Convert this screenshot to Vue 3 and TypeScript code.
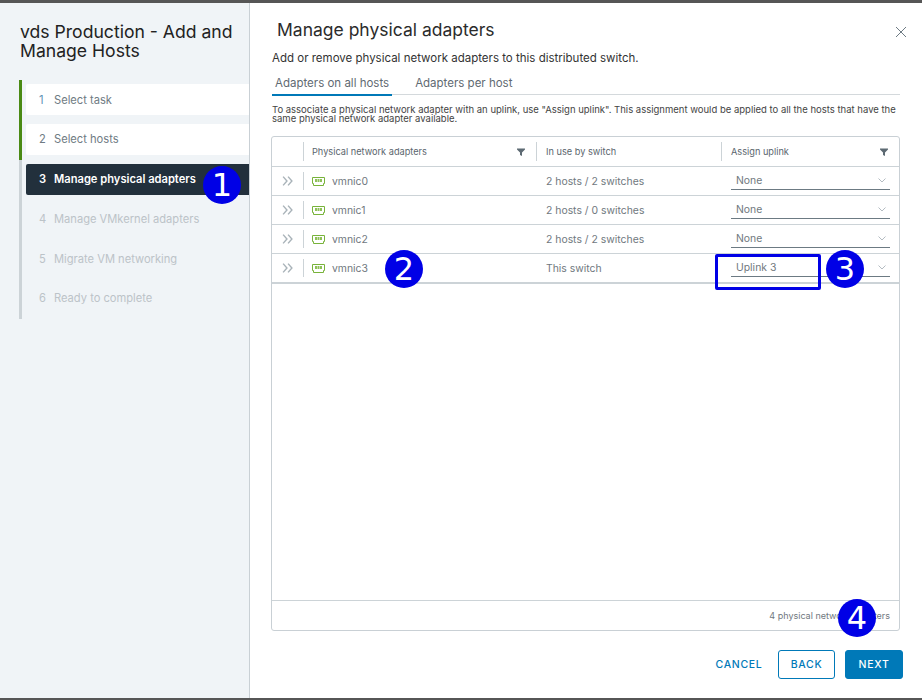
<script setup lang="ts">
interface Step {
  n: number
  label: string
  state: 'done' | 'active' | 'todo'
}
interface Row {
  name: string
  usage: string
  uplink: string
}

const steps: Step[] = [
  { n: 1, label: 'Select task', state: 'done' },
  { n: 2, label: 'Select hosts', state: 'done' },
  { n: 3, label: 'Manage physical adapters', state: 'active' },
  { n: 4, label: 'Manage VMkernel adapters', state: 'todo' },
  { n: 5, label: 'Migrate VM networking', state: 'todo' },
  { n: 6, label: 'Ready to complete', state: 'todo' },
]

const rows: Row[] = [
  { name: 'vmnic0', usage: '2 hosts / 2 switches', uplink: 'None' },
  { name: 'vmnic1', usage: '2 hosts / 0 switches', uplink: 'None' },
  { name: 'vmnic2', usage: '2 hosts / 2 switches', uplink: 'None' },
  { name: 'vmnic3', usage: 'This switch', uplink: 'Uplink 3' },
]
</script>

<template>
  <div class="page">
    <div class="edge" />
    <div class="dialog">
      <aside class="side">
        <h2 class="side-title">vds Production - Add and Manage Hosts</h2>
        <ol class="steps">
          <li v-for="s in steps" :key="s.n" class="step" :class="'step--' + s.state">
            <div class="step-box">
              <span class="step-n">{{ s.n }}</span>
              <span>{{ s.label }}</span>
            </div>
          </li>
        </ol>
      </aside>

      <main class="content">
        <div class="head">
          <h1 class="title">Manage physical adapters</h1>
          <svg class="close" viewBox="0 0 12 12" width="12" height="12">
            <path d="M1 1l10 10M11 1L1 11" stroke="#6d7a83" stroke-width="1" fill="none" />
          </svg>
        </div>
        <p class="lead">Add or remove physical network adapters to this distributed switch.</p>

        <div class="tabs">
          <span class="tab tab--on">Adapters on all hosts</span>
          <span class="tab">Adapters per host</span>
        </div>

        <p class="hint">
          To associate a physical network adapter with an uplink, use "Assign uplink". This assignment would be applied to all the hosts that have the same physical network adapter available.
        </p>

        <section class="grid">
          <div class="tr th">
            <div class="c c-exp" />
            <div class="c c-name">
              <span>Physical network adapters</span>
              <svg class="filter" viewBox="0 0 8 8" width="8" height="8"><path d="M0 0.5h8v1L5 4.5V8L3 7V4.5L0 1.5z" fill="#5d6a73" /></svg>
            </div>
            <div class="c c-use"><span>In use by switch</span></div>
            <div class="c c-up">
              <span>Assign uplink</span>
              <svg class="filter" viewBox="0 0 8 8" width="8" height="8"><path d="M0 0.5h8v1L5 4.5V8L3 7V4.5L0 1.5z" fill="#5d6a73" /></svg>
            </div>
          </div>

          <div v-for="r in rows" :key="r.name" class="tr td">
            <div class="c c-exp">
              <svg viewBox="0 0 10 9" width="11" height="10">
                <path d="M1 .5l3.5 4-3.5 4M5.5 .5l3.5 4-3.5 4" stroke="#a9b3b9" stroke-width="1.3" fill="none" />
              </svg>
            </div>
            <div class="c c-name">
              <svg class="nic" viewBox="0 0 13 9" width="13" height="9">
                <path d="M.5 .5h12v6h-1v2h-10v-2h-1z" stroke="#78b33a" stroke-width="1" fill="none" />
                <path d="M3 2h2v3H3zM5.5 2h2v3h-2zM8 2h2v3H8z" fill="#8fc158" />
              </svg>
              <span class="nic-name">{{ r.name }}</span>
            </div>
            <div class="c c-use plain">{{ r.usage }}</div>
            <div class="c c-up plain">
              <div class="select">
                <span>{{ r.uplink }}</span>
                <svg viewBox="0 0 8 5" width="8" height="5"><path d="M.5 .5L4 4 7.5 .5" stroke="#b4bcc2" fill="none" /></svg>
              </div>
            </div>
          </div>

          <div class="spacer" />
          <div class="foot">4 physical network adapters</div>
        </section>

        <div class="actions">
          <button class="btn btn--link">CANCEL</button>
          <button class="btn btn--outline">BACK</button>
          <button class="btn btn--solid">NEXT</button>
        </div>
      </main>
    </div>
    <div class="edge edge--bottom" />

    <!-- numbered callouts drawn on top of the screenshot -->
    <span class="mark mark-1">1</span>
    <span class="mark mark-2">2</span>
    <span class="mark mark-3">3</span>
    <span class="mark mark-4">4</span>
    <span class="outline-box" />
  </div>
</template>

<style>
body {
  background: #fff;
}
</style>

<style scoped>
.page {
  position: relative;
  width: 922px;
  height: 700px;
  display: flex;
  flex-direction: column;
  overflow: hidden;
  font-family: Inter, "Liberation Sans", sans-serif;
  color: #565656;
}

.edge {
  height: 3px;
  background: #565656;
  flex: none;
}

.edge--bottom {
  height: 2px;
}

.dialog {
  flex: 1;
  display: flex;
  min-height: 0;
}

.side {
  width: 249px;
  flex: none;
  background: #f0f4f7;
  border-right: 1px solid #c9d0d5;
  padding-top: 19px;
}

.side-title {
  margin: 0 0 0 20px;
  width: 225px;
  font-size: 17.6px;
  line-height: 19px;
  font-weight: 400;
  color: #222;
}

.steps {
  list-style: none;
  margin: 20px 0 0 19px;
  padding: 0;
  border-left: 3px solid #ccd3d7;
}

.step {
  padding: 4px 0 0 4px;
  height: 39.75px;
  box-sizing: border-box;
  font-size: 11.15px;
}

.step--done {
  border-left: 3px solid #4a8a14;
  margin-left: -3px;
}

.step-box {
  height: 31px;
  display: flex;
  align-items: center;
  padding-left: 13px;
  border-radius: 2px 0 0 2px;
}

.step-n {
  width: 15px;
  flex: none;
}

.step--done .step-box {
  background: #fff;
  color: #6f7b83;
}

.step--done:first-child .step-n {
  color: #5f93b5;
}

.step--active .step-box {
  background: #22303c;
  color: #fff;
  font-weight: 600;
}

.step--todo .step-box {
  color: #bcc3c8;
}

.content {
  flex: 1;
  min-width: 0;
  padding: 16px 22px 0 22px;
  display: flex;
  flex-direction: column;
}

.head {
  display: flex;
  justify-content: space-between;
  align-items: center;
  padding-left: 5px;
  height: 20px;
}

.title {
  margin: 0;
  font-size: 17.5px;
  font-weight: 400;
  color: #2b2b2b;
}

.close {
  margin: 5px -7px 0 0;
}

.lead {
  margin: 12px 0 0;
  font-size: 11.5px;
  line-height: 14px;
  color: #333;
}

.tabs {
  display: flex;
  gap: 20px;
  margin-top: 9px;
  height: 20px;
  border-bottom: 1px solid #d4d9dc;
  width: 628px;
  font-size: 11.5px;
}

.tab {
  padding: 2px 3px 0;
  color: #5f6a72;
  line-height: 14px;
}

.tab--on {
  border-bottom: 2px solid #0079b8;
  height: 18px;
}

.hint {
  margin: 10px 0 0;
  width: 632px;
  font-size: 9.5px;
  line-height: 9px;
  color: #444;
}

.grid {
  margin: 13px 0 0 -1px;
  width: 629px;
  height: 495px;
  box-sizing: border-box;
  border: 1px solid #c9d0d5;
  border-radius: 3px;
  display: flex;
  flex-direction: column;
  font-size: 10.4px;
}

.tr {
  display: flex;
  flex: none;
  box-sizing: border-box;
  border-bottom: 1px solid #ccd3d7;
}

.th {
  height: 30px;
  color: #5a656d;
  font-size: 9.2px;
}

.td {
  height: 29px;
  color: #70787e;
}

.td:nth-child(5) {
  height: 30px;
  border-bottom-width: 2px;
}

.c {
  display: flex;
  align-items: center;
  box-sizing: border-box;
  min-width: 0;
}

.c-exp {
  width: 31px;
  justify-content: center;
  position: relative;
}

.c-name,
.c-use,
.c-up {
  position: relative;
  padding-left: 9px;
}

.c-name {
  width: 233px;
  gap: 7px;
}

.c-use {
  width: 185px;
  padding-left: 10px;
}

.c-up {
  flex: 1;
  padding-left: 10px;
  padding-right: 9px;
}

.c-exp + .c-name::before,
.th .c-use::before,
.th .c-up::before {
  content: "";
  position: absolute;
  left: 0;
  top: 5px;
  bottom: 5px;
  width: 1px;
  background: #ccd3d7;
}

.th .c-name,
.th .c-up {
  justify-content: space-between;
}

.th .c-name {
  padding-right: 11px;
}

.th .c-up {
  padding-right: 11px;
}

.select {
  flex: 1;
  height: 23px;
  box-sizing: border-box;
  align-self: flex-start;
  display: flex;
  align-items: center;
  justify-content: space-between;
  padding: 4px 4px 0 5px;
  border-bottom: 1px solid #6c7a83;
}

.spacer {
  flex: 1;
}

.foot {
  flex: none;
  height: 30px;
  box-sizing: border-box;
  border-top: 1px solid #ccd3d7;
  display: flex;
  align-items: center;
  justify-content: flex-end;
  padding-right: 9px;
  font-size: 9px;
  color: #70787e;
}

.actions {
  display: flex;
  justify-content: flex-end;
  align-items: center;
  gap: 10px;
  margin: 19px -3px 0 0;
}

.btn {
  height: 29px;
  box-sizing: border-box;
  border-radius: 3px;
  font-family: inherit;
  font-size: 10.5px;
  font-weight: 500;
  letter-spacing: 0.7px;
  background: none;
  border: 1px solid transparent;
  padding: 0;
}

.btn--link {
  color: #0079b8;
  width: 58px;
}

.btn--outline {
  color: #0079b8;
  border-color: #0079b8;
  width: 57px;
}

.btn--solid {
  color: #fff;
  background: #0079b8;
  border-color: #0079b8;
  width: 58px;
}

.mark {
  position: absolute;
  width: 38px;
  height: 38px;
  border-radius: 50%;
  background: #0000e6;
  color: #fff;
  font-family: "DejaVu Sans", sans-serif;
  font-size: 32px;
  line-height: 38px;
  text-align: center;
}

.mark-1 { left: 203px; top: 166px; }
.mark-2 { left: 385px; top: 250px; }
.mark-3 { left: 826px; top: 250px; }
.mark-4 { left: 838px; top: 599px; }

.outline-box {
  position: absolute;
  left: 715px;
  top: 254px;
  width: 106px;
  height: 36px;
  box-sizing: border-box;
  border: 3px solid #0000e6;
  border-radius: 2px;
}
</style>
